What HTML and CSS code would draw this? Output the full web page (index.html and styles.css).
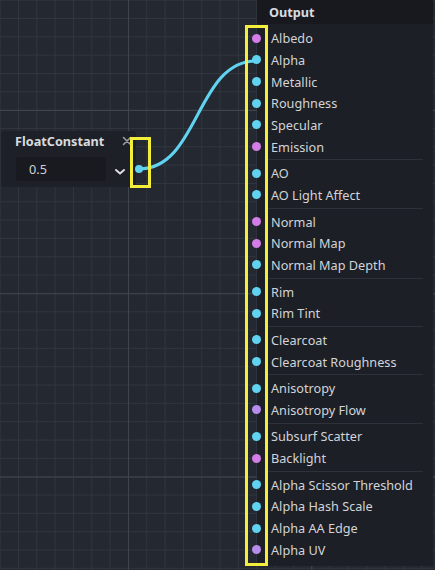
FILE: index.html
```html
<!DOCTYPE html>
<html>
<head>
<meta charset="utf-8">
<link rel="stylesheet" href="styles.css">
</head>
<body>
<div class="canvas">
  <svg class="wire" width="435" height="570" viewBox="0 0 435 570">
    <path d="M139 169 C 199 169, 196 61, 256 61" fill="none" stroke="#5fd3f0" stroke-width="3" stroke-linecap="round"/>
  </svg>

  <div class="node fc">
    <div class="fc-head">
      <span class="fc-title">FloatConstant</span>
      <svg class="fc-close" width="10" height="10" viewBox="0 0 10 10"><path d="M1.5 1.5 L8.5 8.5 M8.5 1.5 L1.5 8.5" fill="none" stroke="#9a9da3" stroke-width="1.6" stroke-linecap="round"/></svg>
    </div>
    <div class="fc-body">
      <div class="fc-input">0.5</div>
      <svg class="chev" width="10" height="6" viewBox="0 0 10 6"><path d="M1 1 L5 4.5 L9 1" fill="none" stroke="#dfe1e5" stroke-width="1.9" stroke-linecap="round" stroke-linejoin="round"/></svg>
    </div>
    <span class="dot cyan fc-dot"></span>
  </div>

  <div class="node out">
    <div class="out-head">Output</div>
    <div class="out-body">
      <div class="row"><span class="dot mag"></span>Albedo</div>
      <div class="row"><span class="dot cyan"></span>Alpha</div>
      <div class="row"><span class="dot cyan"></span>Metallic</div>
      <div class="row"><span class="dot cyan"></span>Roughness</div>
      <div class="row"><span class="dot cyan"></span>Specular</div>
      <div class="row"><span class="dot mag"></span>Emission</div>
      <div class="sep"></div>
      <div class="row"><span class="dot cyan"></span>AO</div>
      <div class="row"><span class="dot cyan"></span>AO Light Affect</div>
      <div class="sep"></div>
      <div class="row"><span class="dot mag"></span>Normal</div>
      <div class="row"><span class="dot mag"></span>Normal Map</div>
      <div class="row"><span class="dot cyan"></span>Normal Map Depth</div>
      <div class="sep"></div>
      <div class="row"><span class="dot cyan"></span>Rim</div>
      <div class="row"><span class="dot cyan"></span>Rim Tint</div>
      <div class="sep"></div>
      <div class="row"><span class="dot cyan"></span>Clearcoat</div>
      <div class="row"><span class="dot cyan"></span>Clearcoat Roughness</div>
      <div class="sep"></div>
      <div class="row"><span class="dot cyan"></span>Anisotropy</div>
      <div class="row"><span class="dot lav"></span>Anisotropy Flow</div>
      <div class="sep"></div>
      <div class="row"><span class="dot cyan"></span>Subsurf Scatter</div>
      <div class="row"><span class="dot mag"></span>Backlight</div>
      <div class="sep"></div>
      <div class="row"><span class="dot cyan"></span>Alpha Scissor Threshold</div>
      <div class="row"><span class="dot cyan"></span>Alpha Hash Scale</div>
      <div class="row"><span class="dot cyan"></span>Alpha AA Edge</div>
      <div class="row"><span class="dot lav"></span>Alpha UV</div>
    </div>
  </div>

  <div class="hl hl-small"></div>
  <div class="hl hl-big"></div>
</div>
</body>
</html>
```

FILE: styles.css
```css
* { box-sizing: border-box; }
html, body { margin: 0; padding: 0; }
body {
  width: 435px;
  height: 570px;
  overflow: hidden;
  font-family: "Noto Sans", "Open Sans", sans-serif;
  background: #252930;
}
.canvas {
  position: relative;
  width: 435px;
  height: 570px;
  overflow: hidden;
  background-color: #242830;
  background-image:
    linear-gradient(to right, #40454d 1px, transparent 1px),
    linear-gradient(to bottom, #40454d 1px, transparent 1px),
    linear-gradient(to right, #31363e 1px, transparent 1px),
    linear-gradient(to bottom, #31363e 1px, transparent 1px);
  background-size: 183.3px 183.3px, 183.3px 183.3px, 18.33px 18.33px, 18.33px 18.33px;
  background-position: 128px 0, 0 110px, -0.33px -0.33px, -0.33px -0.33px;
}
.wire {
  position: absolute;
  left: 0;
  top: 0;
  z-index: 3;
  pointer-events: none;
}
.node { position: absolute; }

.dot {
  position: absolute;
  width: 9px;
  height: 9px;
  border-radius: 50%;
}
.cyan { background: #5fd3f0; }
.mag { background: #d47ce8; }
.lav { background: #b68ded; }

/* FloatConstant node */
.fc {
  left: 1px;
  top: 131px;
  width: 135px;
  height: 56px;
  background: #1d2026;
  border-radius: 3px;
  z-index: 2;
}
.fc-head {
  display: flex;
  align-items: center;
  justify-content: space-between;
  height: 20px;
  padding: 0 4px 0 14px;
}
.fc-title {
  font-weight: 700;
  font-size: 12.7px;
  color: #d8dade;
}
.fc-close {
  display: block;
}
.fc-body {
  display: flex;
  align-items: center;
  padding: 6px 0 0 15px;
}
.fc-input {
  width: 90px;
  height: 24px;
  background: #181a1f;
  border-radius: 2px;
  color: #cfd1d5;
  font-size: 12.7px;
  line-height: 24px;
  padding-left: 13px;
}
.chev {
  margin-left: 9px;
  margin-top: 5px;
}
.fc-dot {
  left: 134px;
  top: 33.5px;
  width: 8px;
  height: 8px;
  z-index: 4;
}

/* Output node */
.out {
  left: 257px;
  top: 0;
  width: 176px;
  height: 566px;
  background: #1c1f26;
  display: flex;
  flex-direction: column;
  z-index: 2;
}
.out-head {
  height: 24px;
  background: #17191e;
  color: #dadce0;
  font-weight: 700;
  font-size: 12.7px;
  display: flex;
  align-items: center;
  padding-left: 12px;
}
.out-body {
  padding-top: 3.5px;
  display: flex;
  flex-direction: column;
}
.row {
  position: relative;
  height: 21.66px;
  display: flex;
  align-items: center;
  padding-left: 14px;
  font-size: 12.7px;
  color: #d2d4d8;
  white-space: nowrap;
}
.row .dot {
  left: -5.5px;
  top: 6.3px;
  z-index: 4;
}
.sep {
  height: 1px;
  margin: 2px 10px 2px 11px;
  background: #2d3139;
}

/* highlight boxes */
.hl {
  position: absolute;
  border: 3px solid #f3ee3c;
  z-index: 5;
}
.hl-small {
  left: 130px;
  top: 137px;
  width: 21px;
  height: 51px;
}
.hl-big {
  left: 245px;
  top: 25px;
  width: 23px;
  height: 541px;
}
```
